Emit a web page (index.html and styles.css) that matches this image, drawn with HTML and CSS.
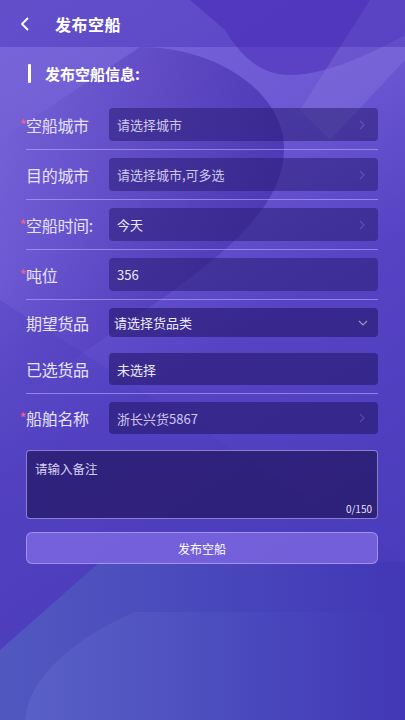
FILE: index.html
```html
<!DOCTYPE html>
<html lang="zh">
<head>
<meta charset="utf-8">
<title>发布空船</title>
<link rel="stylesheet" href="styles.css">
</head>
<body>
<div class="page">
  <svg class="bg" width="405" height="720" viewBox="0 0 405 720" aria-hidden="true">
    <defs>
      <linearGradient id="base" x1="0" y1="0" x2="0.35" y2="1">
        <stop offset="0" stop-color="#7a67d9"/>
        <stop offset="0.35" stop-color="#6d59d3"/>
        <stop offset="0.6" stop-color="#5643c4"/>
        <stop offset="1" stop-color="#4a3cbc"/>
      </linearGradient>
      <linearGradient id="swoosh" x1="0" y1="0" x2="1" y2="0">
        <stop offset="0" stop-color="#4a34b0" stop-opacity="0"/>
        <stop offset="0.55" stop-color="#4a34b0" stop-opacity="0.45"/>
        <stop offset="1" stop-color="#4630ad" stop-opacity="0.75"/>
      </linearGradient>
      <linearGradient id="low" x1="0" y1="0" x2="1" y2="0">
        <stop offset="0" stop-color="#5158c0"/>
        <stop offset="0.6" stop-color="#4845bb"/>
        <stop offset="1" stop-color="#4237b6"/>
      </linearGradient>
      <linearGradient id="wedge" x1="0" y1="0" x2="1" y2="0">
        <stop offset="0" stop-color="#6068cc" stop-opacity="0.55"/>
        <stop offset="0.6" stop-color="#5560c6" stop-opacity="0.15"/>
        <stop offset="1" stop-color="#5560c6" stop-opacity="0"/>
      </linearGradient>
    </defs>
    <rect width="405" height="720" fill="url(#base)"/>
    <path d="M190 0 L405 0 L405 35 C360 60 320 75 290 75 C260 75 240 55 225 30 Z" fill="#5238bd" opacity="0.7"/>
    <path d="M370 0 L405 0 L405 60 L330 140 L300 110 Z" fill="#8a7be2" opacity="0.35"/>
    <path d="M140 47 C220 47 285 95 284 150 C283 205 230 250 160 300 L0 410 L0 140 Z" fill="url(#swoosh)"/>
    <path d="M0 300 L0 720 L405 720 L405 560 Z" fill="#4a3cba" opacity="0.3"/>
    <path d="M100 562 L405 562 L405 720 L0 720 L0 650 Z" fill="url(#low)"/>
    <path d="M25 720 C28 680 70 640 135 612 L405 612 L405 720 Z" fill="url(#wedge)"/>
  </svg>

  <header class="nav">
    <span class="back">
      <svg width="10" height="14" viewBox="0 0 10 14"><path d="M7.5 1.5 L2 7 L7.5 12.5" fill="none" stroke="#ffffff" stroke-width="1.8" stroke-linecap="round" stroke-linejoin="round"/></svg>
    </span>
    <h1 class="nav-title">发布空船</h1>
  </header>

  <main class="form">
    <div class="section-title">发布空船信息:</div>

    <div class="row line">
      <span class="label req">空船城市</span>
      <div class="field"><span class="ph">请选择城市</span><svg class="arrow" width="6" height="10" viewBox="0 0 6 10"><path d="M1 1 L5 5 L1 9" fill="none" stroke="currentColor" stroke-width="1.2"/></svg></div>
    </div>

    <div class="row line">
      <span class="label">目的城市</span>
      <div class="field"><span class="ph">请选择城市,可多选</span><svg class="arrow" width="6" height="10" viewBox="0 0 6 10"><path d="M1 1 L5 5 L1 9" fill="none" stroke="currentColor" stroke-width="1.2"/></svg></div>
    </div>

    <div class="row line">
      <span class="label req">空船时间:</span>
      <div class="field"><span class="val">今天</span><svg class="arrow" width="6" height="10" viewBox="0 0 6 10"><path d="M1 1 L5 5 L1 9" fill="none" stroke="currentColor" stroke-width="1.2"/></svg></div>
    </div>

    <div class="row line">
      <span class="label req">吨位</span>
      <div class="field"><span class="val">356</span></div>
    </div>

    <div class="row">
      <span class="label">期望货品</span>
      <div class="field select"><span class="val">请选择货品类</span><svg class="down" width="10" height="6" viewBox="0 0 10 6"><path d="M1 1 L5 5 L9 1" fill="none" stroke="currentColor" stroke-width="1.2"/></svg></div>
    </div>

    <div class="row line">
      <span class="label">已选货品</span>
      <div class="field short"><span class="val">未选择</span></div>
    </div>

    <div class="row">
      <span class="label req">船舶名称</span>
      <div class="field short"><span class="ph">浙长兴货5867</span><svg class="arrow" width="6" height="10" viewBox="0 0 6 10"><path d="M1 1 L5 5 L1 9" fill="none" stroke="currentColor" stroke-width="1.2"/></svg></div>
    </div>

    <div class="remark">
      <span class="remark-ph">请输入备注</span>
      <span class="counter">0/150</span>
    </div>

    <button class="submit" type="button">发布空船</button>
  </main>
</div>
</body>
</html>
```

FILE: styles.css
```css
* { box-sizing: border-box; }

html, body {
  margin: 0;
  padding: 0;
}

body {
  font-family: "Noto Sans CJK SC", "Noto Sans", "Liberation Sans", sans-serif;
  background: #4539b6;
}

.page {
  position: relative;
  width: 405px;
  height: 720px;
  overflow: hidden;
  color: #ffffff;
}

.bg {
  position: absolute;
  left: 0;
  top: 0;
  z-index: 0;
}

.nav {
  position: relative;
  z-index: 1;
  height: 47px;
  display: flex;
  align-items: center;
  padding-left: 20px;
  background: rgba(62, 40, 178, 0.38);
}

.back {
  display: flex;
  align-items: center;
  width: 35px;
}

.nav-title {
  margin: 0;
  font-size: 16px;
  font-weight: 700;
  letter-spacing: 0.5px;
  color: #ffffff;
}

.form {
  position: relative;
  z-index: 1;
  padding: 0 27px 0 26px;
}

.section-title {
  height: 53px;
  display: flex;
  align-items: center;
  padding-left: 2px;
  font-size: 15px;
  font-weight: 700;
  color: #ffffff;
}

.section-title::before {
  content: "";
  width: 3px;
  height: 19px;
  background: #ffffff;
  border-radius: 1px;
  margin-right: 14px;
}

.row {
  display: flex;
  align-items: center;
  padding: 8px 0;
}

.row.line {
  border-bottom: 1px solid rgba(185, 172, 250, 0.6);
}

.label {
  position: relative;
  width: 83px;
  flex: none;
  font-size: 16px;
  color: #e6e2f8;
  white-space: nowrap;
  letter-spacing: -0.3px;
}

.label.req::before {
  content: "*";
  position: absolute;
  left: -6px;
  top: 2px;
  font-size: 12px;
  font-weight: 700;
  color: #f0608e;
}

.field {
  flex: 1;
  height: 33px;
  display: flex;
  align-items: center;
  justify-content: space-between;
  padding: 0 13px 0 8px;
  border-radius: 4px;
  background: rgba(38, 26, 112, 0.52);
  font-size: 13px;
}

.field.select {
  height: 29px;
  padding-left: 5px;
  padding-right: 10px;
  background: rgba(36, 24, 106, 0.6);
}

.field.short {
  height: 32px;
  background: rgba(36, 24, 106, 0.6);
}

.ph {
  color: #cfc8ee;
}

.val {
  color: #ece9fa;
}

.arrow {
  color: rgba(255, 255, 255, 0.16);
}

.down {
  color: rgba(255, 255, 255, 0.5);
}

.remark {
  margin-top: 8px;
  height: 69px;
  display: flex;
  flex-direction: column;
  justify-content: space-between;
  padding: 8px 5px 2px 8px;
  border: 1px solid rgba(200, 190, 255, 0.6);
  border-radius: 4px;
  background: rgba(34, 22, 98, 0.72);
}

.remark-ph {
  font-size: 12.5px;
  color: #d6d0f0;
}

.counter {
  align-self: flex-end;
  font-size: 10px;
  color: #e4e0f6;
}

.submit {
  display: block;
  width: 100%;
  height: 32px;
  margin-top: 13px;
  border: 1px solid rgba(185, 170, 255, 0.65);
  border-radius: 6px;
  background: rgba(140, 118, 236, 0.62);
  font-family: inherit;
  font-size: 12px;
  color: #ffffff;
}
```
